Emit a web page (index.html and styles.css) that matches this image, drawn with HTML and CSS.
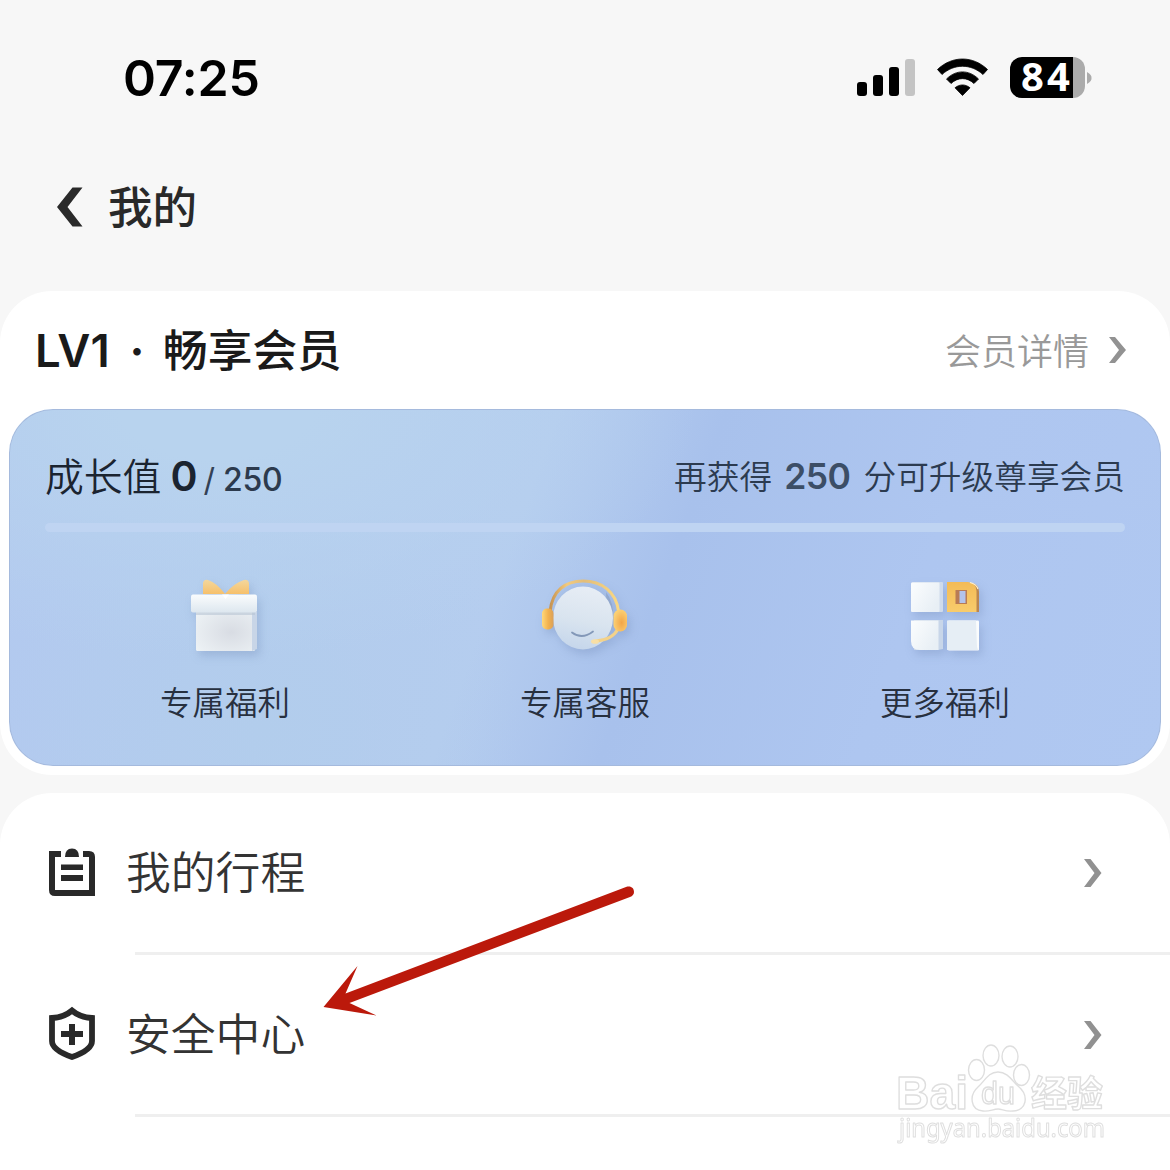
FILE: index.html
```html
<!DOCTYPE html>
<html lang="zh-CN">
<head>
<meta charset="utf-8">
<title>我的</title>
<link rel="stylesheet" href="styles.css">
</head>
<body>
<main class="screen">
  <header class="status">
    <span class="time">07:25</span>
    <div class="indicators">
      <svg class="signal" width="60" height="40" viewBox="855 58 60 40"><rect x="856" y="82" width="10" height="14" rx="3"/><rect x="872" y="75" width="10" height="21" rx="3"/><rect x="888" y="67" width="10" height="29" rx="3"/><rect x="904" y="59" width="10" height="37" rx="3" fill="#c4c4c4"/></svg>
      <svg class="wifi" width="52" height="40" viewBox="936 58 52 40"><path d="M936.5 69.5C951 55.500 972 55.500 986.500 69.500L982 74.500C970 63.500 953 63.500 941 74.500ZM945.500 79C955 69.500 968 69.500 977.500 79L973 83.500C966 77 957 77 950 83.500ZM954 87.800C958.500 84 964.500 84 969 87.800L961.500 95.500Z" stroke="#000" stroke-width=".8" stroke-linejoin="round"/></svg>
      <div class="battery"><span class="battery-body">84</span><svg width="5" height="14" viewBox="0 0 5 14"><path d="M0 1Q5 4 4.500 7Q5 10 0 13Z" fill="#ababab"/></svg></div>
    </div>
  </header>
  <nav class="nav">
    <svg width="28" height="42" viewBox="56 186 28 42"><path d="M72.500 187.500H82.500L67.500 207L82.500 226.500H72.500L57 207Z" fill="#2a2a2a"/></svg>
    <h1 class="nav-title">我的</h1>
  </nav>

  <section class="member">
    <div class="member-head">
      <h2 class="level"><span class="lv">LV1</span><span class="dot">·</span><span>畅享会员</span></h2>
      <a class="detail"><span class="detail-text">会员详情</span><svg width="20" height="30" viewBox="0 0 20 30"><path d="M1 2H7L18 15L7 28H1L11 15Z" fill="#929292"/></svg></a>
    </div>
    <div class="banner">
      <div class="growth">
        <div class="growth-now"><span class="growth-label">成长值</span><b class="points">0</b><span class="slash">/</span><span class="goal">250</span></div>
        <div class="growth-next"><span>再获得</span><b class="need">250</b><span class="next-tail">分可升级尊享会员</span></div>
      </div>
      <div class="track"></div>
      <div class="perks">
        <div class="perk">
          <svg class="perk-icon" width="100" height="100" viewBox="175 565 100 100">
            <defs>
              <linearGradient id="lid" x1="0" y1="0" x2="0" y2="1"><stop offset="0" stop-color="#fafcfd"/><stop offset="1" stop-color="#dde7ef"/></linearGradient>
              <radialGradient id="box" cx=".6" cy=".55" r=".75"><stop offset="0" stop-color="#d8dce3"/><stop offset="1" stop-color="#eef3f6"/></radialGradient>
              <linearGradient id="bow" x1="0" y1="0" x2="0" y2="1"><stop offset="0" stop-color="#f3d79d"/><stop offset="1" stop-color="#f6c06b"/></linearGradient>
            </defs>
            <path d="M203 594V583Q204 579 208 580Q217 583 225 594Q234 583 244 580Q248 579 249 583V594Z" fill="url(#bow)"/>
            <rect x="196" y="609" width="59" height="42" rx="1.500" fill="url(#box)"/>
            <path d="M252 612H257V649L252 651Z" fill="#c8d5e7"/>
            <path d="M196 612H255V615H196Z" fill="#b7c4d3" opacity=".6"/>
            <rect x="191" y="594.500" width="66" height="18" rx="2" fill="url(#lid)"/>
            <path d="M222 594.500H229L225.500 599Z" fill="#fff"/>
          </svg>
          <span class="perk-name">专属福利</span>
        </div>
        <div class="perk">
          <svg class="perk-icon" width="100" height="100" viewBox="535 565 100 100">
            <defs>
              <linearGradient id="head" x1=".6" y1="0" x2=".4" y2="1"><stop offset="0" stop-color="#e7edf5"/><stop offset=".55" stop-color="#d9e4ef"/><stop offset="1" stop-color="#c5d6eb"/></linearGradient>
              <linearGradient id="band" x1="0" y1="0" x2="1" y2="0"><stop offset="0" stop-color="#c69351"/><stop offset=".25" stop-color="#f2ca7d"/><stop offset=".5" stop-color="#e3bd79"/><stop offset="1" stop-color="#f9d883"/></linearGradient>
              <linearGradient id="ear" x1="0" y1="0" x2="1" y2="0"><stop offset="0" stop-color="#ffd879"/><stop offset=".55" stop-color="#f2b14e"/><stop offset="1" stop-color="#d9a05a"/></linearGradient>
              <radialGradient id="cup" cx=".6" cy=".6" r=".6"><stop offset="0" stop-color="#f2a548"/><stop offset="1" stop-color="#fbd074"/></radialGradient>
            </defs>
            <path d="M550 612C552 590 566 581 583 581C602 581 616 592 618.500 611" fill="none" stroke="url(#band)" stroke-width="3"/>
            <path d="M606 592Q614 602 613 619Q612 630 608 634Z" fill="#8ba1c4" opacity=".7"/>
            <ellipse cx="583" cy="618" rx="30" ry="31.500" fill="url(#head)"/>
            <path d="M572 632.500Q582 640 593 631.500" fill="none" stroke="#8398b8" stroke-width="1.800" stroke-linecap="round"/>
            <rect x="542" y="608.500" width="11.500" height="21" rx="5" fill="url(#ear)"/>
            <path d="M618 629Q612 640 596 641" fill="none" stroke="#f3d28a" stroke-width="3" stroke-linecap="round"/>
            <ellipse cx="595" cy="641.500" rx="4" ry="2.300" fill="#f8dfa5"/>
            <rect x="613.500" y="609.500" width="13.500" height="22" rx="6.500" fill="url(#cup)"/>
          </svg>
          <span class="perk-name">专属客服</span>
        </div>
        <div class="perk">
          <svg class="perk-icon" width="100" height="100" viewBox="895 565 100 100">
            <defs>
              <linearGradient id="tile" x1="0" y1="0" x2="1" y2=".6"><stop offset="0" stop-color="#fbfdfe"/><stop offset="1" stop-color="#e8eff5"/></linearGradient>
              <linearGradient id="gold" x1="0" y1="0" x2="0" y2="1"><stop offset="0" stop-color="#f3bb56"/><stop offset="1" stop-color="#f8cc6c"/></linearGradient>
            </defs>
            <rect x="912" y="582" width="31" height="30" rx="1" fill="#cfdbec"/><rect x="911" y="582.500" width="28.500" height="29.500" rx="1" fill="url(#tile)"/>
            <path d="M950 583H970Q979 583 979 592V612H950Z" fill="#ba8650"/>
            <path d="M947 582H968Q976.500 583 976.500 591V612H947Z" fill="url(#gold)"/>
            <path d="M970 582.500Q976.500 584 978 589" fill="none" stroke="#fff0cf" stroke-width="1.200"/>
            <rect x="955.500" y="590" width="11.500" height="14" fill="#b87b55"/><rect x="959.500" y="591" width="6" height="12" fill="#b3c3ea"/>
            <path d="M914 620H943V649L938 650H914Z" fill="#c8d6e9"/><path d="M911 620.500H938.500V650H920Q911 650 911 641Z" fill="url(#tile)"/>
            <rect x="948" y="620.500" width="31" height="30" rx="1" fill="#fafcfd"/><path d="M947 620.500H976L977 647L978 650H947Z" fill="#e6eef5"/>
          </svg>
          <span class="perk-name">更多福利</span>
        </div>
      </div>
    </div>
  </section>

  <section class="menu">
    <a class="row">
      <svg class="row-icon" width="48" height="56" viewBox="48 844 48 56" fill="#292929"><path d="M49 851H61V857H55V890H89V857H83V851H89Q95 851 95 857V896H55Q49 896 49 890ZM65 857Q65 848.500 72 848.500Q79 848.500 79 857ZM61 864.500H83V870H61ZM61 875H83V881H61Z"/></svg>
      <div class="row-main"><span class="row-title">我的行程</span><svg class="chevron" width="20" height="30" viewBox="0 0 20 30"><path d="M1 1H7.500L18.500 15L7.500 29H1L11.500 15Z" fill="#919191"/></svg></div>
    </a>
    <a class="row">
      <svg class="row-icon" width="48" height="56" viewBox="48 1006 48 56"><path d="M72 1010.500Q80 1017.500 92 1018V1041Q92 1050 72 1057Q52 1050 52 1041V1018Q64 1017.500 72 1010.500Z" fill="none" stroke="#292929" stroke-width="5.800"/><path d="M69 1024H75V1031H83V1037H75V1045H69V1037H61V1031H69Z" fill="#292929"/></svg>
      <div class="row-main"><span class="row-title">安全中心</span><svg class="chevron" width="20" height="30" viewBox="0 0 20 30"><path d="M1 1H7.500L18.500 15L7.500 29H1L11.500 15Z" fill="#919191"/></svg></div>
    </a>
  </section>

  <svg class="arrow" width="320" height="140" viewBox="320 880 320 140"><path d="M323.500 1007L357.500 966L345.500 993.500L626 887C631 885.500 634 888 634 892C634 894.500 632.500 896 630 897L349.500 1003L376.500 1015.500Z" fill="#bb190b"/></svg>

  <svg class="watermark" width="240" height="120" viewBox="880 1035 240 120">
    <g fill="#fff" stroke="#d9d9d9" stroke-width="1.400" stroke-linejoin="round">
      <text class="wm-brand" x="896" y="1109" textLength="72" lengthAdjust="spacingAndGlyphs">Bai</text>
      <ellipse cx="976.500" cy="1070" rx="8" ry="10.500"/><ellipse cx="991" cy="1055.500" rx="8" ry="10.500"/><ellipse cx="1010" cy="1056.500" rx="8" ry="10.500"/><ellipse cx="1021.500" cy="1075" rx="8" ry="10.500"/>
      <path d="M998 1072C1008 1072 1012 1081 1018 1086C1030 1096 1026 1111 1013 1111C1006 1112 1002 1109 998 1109C993 1109 989 1112 983 1111C970 1110 969 1095 978 1087C985 1081 988 1072 998 1072Z"/>
      <text class="wm-du" x="981" y="1104" textLength="34" lengthAdjust="spacingAndGlyphs">du</text>
      <text class="wm-cn" x="1031" y="1107" textLength="72" lengthAdjust="spacingAndGlyphs">经验</text>
      <text class="wm-url" x="899" y="1137" textLength="206" lengthAdjust="spacingAndGlyphs">jingyan.baidu.com</text>
    </g>
  </svg>
</main>
</body>
</html>
```
FILE: styles.css
```css
* { box-sizing: border-box; }
body { margin: 0; background: #f7f7f7; }
h1, h2 { margin: 0; font-weight: 500; }
svg { display: block; flex: none; }

.screen {
  position: relative;
  width: 1170px;
  height: 1170px;
  overflow: hidden;
  display: flex;
  flex-direction: column;
  background: #f7f7f7;
  font-family: Inter, "Noto Sans CJK SC", sans-serif;
  color: #333;
  white-space: nowrap;
}
.status, .nav, .member, .menu { flex: none; }

.status {
  height: 155px;
  padding: 0 78px 0 123px;
  display: flex;
  align-items: center;
  justify-content: space-between;
  color: #000;
}
.time { font-size: 50px; font-weight: 600; line-height: 60px; letter-spacing: -0.2px; }
.indicators { display: flex; align-items: center; }
.wifi { margin-left: 21px; }
.battery { display: flex; align-items: center; gap: 2px; margin-left: 21px; }
.battery-body {
  width: 75px;
  height: 41px;
  padding-left: 11px;
  border-radius: 12px;
  background: linear-gradient(90deg, #000 63px, #ababab 63px);
  color: #fff;
  font: 700 40px/38px "Noto Sans", sans-serif;
  letter-spacing: 3px;
}

.nav { height: 136px; padding: 1px 56px 33px; display: flex; align-items: center; gap: 24px; }
.nav-title { padding-top: 2px; font-size: 44.500px; line-height: 60px; color: #292929; }

.member { height: 484px; padding: 0 9px; border-radius: 52px; background: #fff; }
.member-head { height: 118px; padding: 0 33px 0 26px; display: flex; align-items: center; justify-content: space-between; }
.level { padding-top: 2px; display: flex; align-items: center; font-size: 44.700px; line-height: 60px; color: #1a1a1a; }
.lv { width: 76px; font-size: 45.500px; font-weight: 600; }
.dot { width: 52px; text-align: center; font-weight: 700; }
.detail { display: flex; align-items: center; gap: 19px; font-size: 36px; font-weight: 350; color: #999; }
.detail-text { padding-bottom: 3px; }

.banner {
  height: 357px;
  padding: 36px;
  border-radius: 44px;
  box-shadow: inset 0 0 0 1px #a5badd;
  background:
    radial-gradient(ellipse 480px 250px at 18% 0, #b8d3ee 20%, transparent),
    radial-gradient(ellipse 260px 260px at 22% 90%, #b2cdec, transparent),
    linear-gradient(110deg, #b2c9ef 0, #b5cdef 43%, #a8c1ec 56%, #aec6f0 76%, #b0c8f1 100%);
}
.growth { height: 64px; display: flex; align-items: center; justify-content: space-between; }
.growth-now { display: flex; align-items: baseline; color: #1b2430; }
.growth-label { font-size: 38.800px; font-weight: 350; line-height: 56px; }
.points { margin-left: 9px; font-size: 41px; font-weight: 600; }
.slash { margin-left: 6px; font-size: 32px; color: #334155; }
.goal { margin-left: 8px; font-size: 32px; font-weight: 500; letter-spacing: -0.300px; color: #2c3a4d; }
.growth-next { display: flex; align-items: center; font-size: 32.700px; font-weight: 350; line-height: 56px; color: #2c3b50; }
.need { margin: 0 13px 0 12px; font-size: 35.500px; font-weight: 600; letter-spacing: -0.500px; color: #3c4e66; }
.track { height: 9px; margin-top: 14px; border-radius: 5px; background: #bfd4f2; }
.perks { margin-top: 33px; display: grid; grid-template-columns: repeat(3, 1fr); }
.perk { display: flex; flex-direction: column; align-items: center; gap: 15px; }
.perk-icon { filter: drop-shadow(3px 5px 4px rgba(90, 115, 165, .25)); }
.perk-name { font-size: 32.500px; font-weight: 350; line-height: 48px; color: #27303f; }

.menu { height: 430px; margin-top: 18px; border-radius: 52px 52px 0 0; background: #fff; }
.row { height: 162px; padding-left: 48px; display: flex; align-items: center; gap: 30px; }
.row-icon { margin-bottom: 4px; }
.row-main {
  flex: 1;
  height: 162px;
  padding: 0 67px 3px 0;
  display: flex;
  align-items: center;
  justify-content: space-between;
  background: linear-gradient(#efefef, #efefef) 9px 100% / 100% 3px no-repeat;
}
.row-title { font-size: 44.800px; font-weight: 350; line-height: 60px; color: #333; }

.arrow { position: absolute; left: 320px; top: 880px; }
.watermark { position: absolute; left: 880px; top: 1035px; opacity: .85; }
.wm-brand { font: 700 47px "Liberation Sans", sans-serif; }
.wm-du { font: 400 32px "Liberation Sans", sans-serif; }
.wm-cn { font: 700 36px "Noto Sans CJK SC", sans-serif; }
.wm-url { font: 400 25px "Noto Sans", sans-serif; stroke-width: 1; }
```
